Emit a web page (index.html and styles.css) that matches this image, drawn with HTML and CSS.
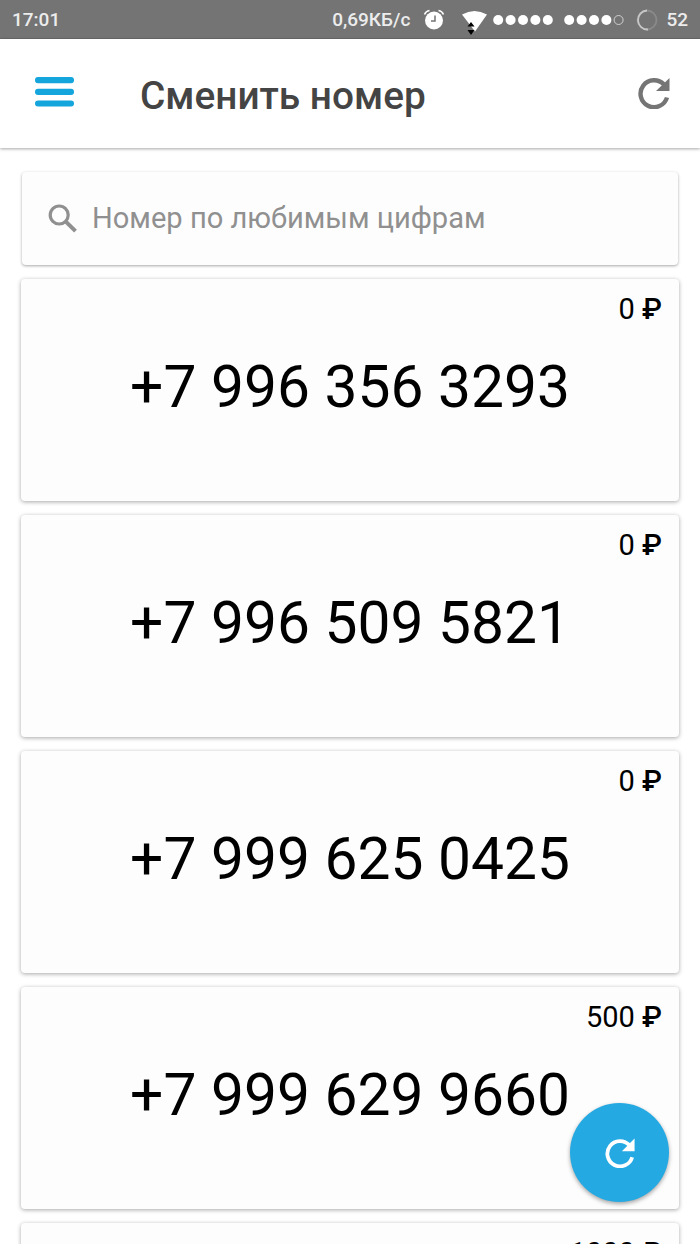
FILE: index.html
```html
<!DOCTYPE html>
<html lang="ru">
    <head>
        <meta charset="UTF-8" />
        <meta name="viewport" content="width=device-width, initial-scale=1.0" />
        <title>Сменить номер</title>
        <link rel="stylesheet" href="styles.css">
    </head>
    <body>
        <!-- status bar -->
        <div class="status">
            <span class="time">17:01</span>
            <span class="speed">0,69КБ/с</span>
            <svg class="alarm" width="22" height="22" viewBox="0 0 22 22">
                <circle cx="11" cy="11.500" r="9" fill="#fff" />
                <path d="M1.500 5.500Q3 2 6.500 1.500M15.500 1.500Q19 2 20.500 5.500" fill="none" stroke="#fff" stroke-width="1.600" />
                <path d="M12 6.500v5.500H8" fill="none" stroke="#747474" stroke-width="1.500" />
            </svg>
            <svg class="wifi" width="26" height="26" viewBox="0 0 26 26">
                <path d="M0 5.500Q12.500-1.500 25 5.500L13 22.500Z" fill="#fff" />
                <path d="M9 13l3.500 4.500h-7ZM9 26l3.500-5h-7Z" fill="#000" />
            </svg>
            <svg class="signal" width="60" height="12" viewBox="0 0 60 12" fill="#fff">
                <circle cx="5.200" cy="6" r="5" />
                <circle cx="17.600" cy="6" r="5" />
                <circle cx="30" cy="6" r="5" />
                <circle cx="42.400" cy="6" r="5" />
                <circle cx="54.800" cy="6" r="5" />
            </svg>
            <svg class="signal second" width="60" height="12" viewBox="0 0 60 12" fill="#fff">
                <circle cx="5.200" cy="6" r="5" />
                <circle cx="17.600" cy="6" r="5" />
                <circle cx="30" cy="6" r="5" />
                <circle cx="42.400" cy="6" r="5" />
                <circle cx="54.600" cy="6" r="4.500" fill="none" stroke="#d0d0d0" />
            </svg>
            <svg class="ring" width="22" height="22" viewBox="0 0 22 22" fill="none" stroke-width="1.800">
                <circle cx="11" cy="11" r="9.500" stroke="#8a8a8a" />
                <path d="M11 1.500A9.500 9.500 0 0 0 12 20.500" stroke="#c8c8c8" />
            </svg>
            <span class="battery">52</span>
        </div>

        <!-- header -->
        <header class="header">
            <svg class="menu" width="40" height="30" viewBox="0 0 40 30" fill="#14a5dc">
                <rect x="0" y="0" width="39" height="6.200" rx="3" />
                <rect x="0" y="11.700" width="39" height="6.200" rx="3" />
                <rect x="0" y="23.400" width="39" height="6.200" rx="3" />
            </svg>
            <h1>Сменить номер</h1>
            <svg class="reload" width="32" height="32" viewBox="0 0 32 32">
                <path d="M26 7.600A13.500 13.500 0 1 0 29 20.500" fill="none" stroke="#757575" stroke-width="4.400" />
                <path d="M31.500 1V14H18Z" fill="#757575" />
            </svg>
        </header>

        <main class="cont">
            <div class="search">
                <svg width="30" height="30" viewBox="0 0 30 30" fill="none" stroke="#909090">
                    <circle cx="11.200" cy="11" r="9" stroke-width="3.200" />
                    <path d="M17.800 17.600L27.500 27.200" stroke-width="4" />
                </svg>
                <span>Номер по любимым цифрам</span>
            </div>

            <ul class="list">
                <li>
                    <p class="price">0 <b>₽</b></p>
                    <p class="num">+7 996 356 3293</p>
                </li>
                <li>
                    <p class="price">0 <b>₽</b></p>
                    <p class="num">+7 996 509 5821</p>
                </li>
                <li>
                    <p class="price">0 <b>₽</b></p>
                    <p class="num">+7 999 625 0425</p>
                </li>
                <li>
                    <p class="price">500 <b>₽</b></p>
                    <p class="num">+7 999 629 9660</p>
                </li>
                <li>
                    <p class="price">1000 <b>₽</b></p>
                </li>
            </ul>
        </main>

        <!-- floating button -->
        <div class="fab">
            <svg width="30" height="30" viewBox="0 0 32 32">
                <path d="M26 7.600A13.500 13.500 0 1 0 29 20.500" fill="none" stroke="#fff" stroke-width="4" />
                <path d="M31.500 0.500V14H18Z" fill="#fff" />
            </svg>
        </div>
    </body>
</html>
```
FILE: styles.css
```css
html,
body {
    margin: 0;
    padding: 0;
    height: 100%;
}
body {
    position: relative;
    height: 1244px;
    overflow: hidden;
    font-family: Roboto, "Liberation Sans", sans-serif;
    color: #000;
    background: #fff;
}
ul,
p,
h1 {
    margin: 0;
    padding: 0;
    list-style: none;
}
svg {
    display: block;
    flex-shrink: 0;
}

/* status bar */
.status {
    display: flex;
    align-items: center;
    box-sizing: border-box;
    height: 39px;
    padding: 1px 12px 0;
    color: #ececec;
    background: #747474;
    border-bottom: 1px solid #6a6a6a;
    font-size: 19px;
    font-weight: 500;
}
.speed {
    margin-left: auto;
}
.alarm {
    margin-left: 13px;
}
.wifi {
    margin: 5px 0 0 17px;
}
.signal {
    margin-left: 5px;
}
.second {
    margin-left: 11px;
}
.ring {
    margin-left: 12px;
}
.battery {
    margin-left: 8px;
}

/* header */
.header {
    display: flex;
    align-items: center;
    box-sizing: border-box;
    height: 109px;
    padding: 0 30px 0 35px;
    background: #fff;
    box-shadow: 0 1px 3px rgba(0, 0, 0, 0.35);
}
.menu {
    margin-bottom: 3px;
}
.reload {
    margin-bottom: 2px;
}
.header h1 {
    flex: 1;
    margin: 3px 0 0 65px;
    color: #444;
    font-size: 38.8px;
    font-weight: 500;
}

/* content */
.cont {
    padding: 24px 21px 0;
}
.search {
    display: flex;
    align-items: center;
    gap: 14px;
    box-sizing: border-box;
    height: 93px;
    margin: 0 1px;
    padding: 0 26px;
    color: #909090;
    background: #fdfdfd;
    border-radius: 4px;
    box-shadow: 0 1px 3px rgba(0, 0, 0, 0.35);
    font-size: 29.1px;
}
.search span {
    margin-bottom: 2px;
}
.list {
    display: flex;
    flex-direction: column;
    gap: 14px;
    margin-top: 14px;
}
.list li {
    box-sizing: border-box;
    height: 222px;
    padding-top: 12px;
    background: #fdfdfd;
    border-radius: 4px;
    box-shadow: 0 1px 4px rgba(0, 0, 0, 0.35);
}
.price {
    padding-right: 17px;
    font-size: 29px;
    line-height: 36px;
    text-align: right;
}
.price b {
    font-weight: 500;
}
.num {
    margin-top: 25px;
    font-size: 58.7px;
    line-height: 70px;
    text-align: center;
}

/* floating button */
.fab {
    position: absolute;
    left: 570px;
    top: 1103px;
    display: flex;
    align-items: center;
    justify-content: center;
    width: 99px;
    height: 99px;
    border-radius: 50%;
    background: #25a9e2;
    box-shadow: 0 2px 4px rgba(0, 0, 0, 0.35);
}
```
